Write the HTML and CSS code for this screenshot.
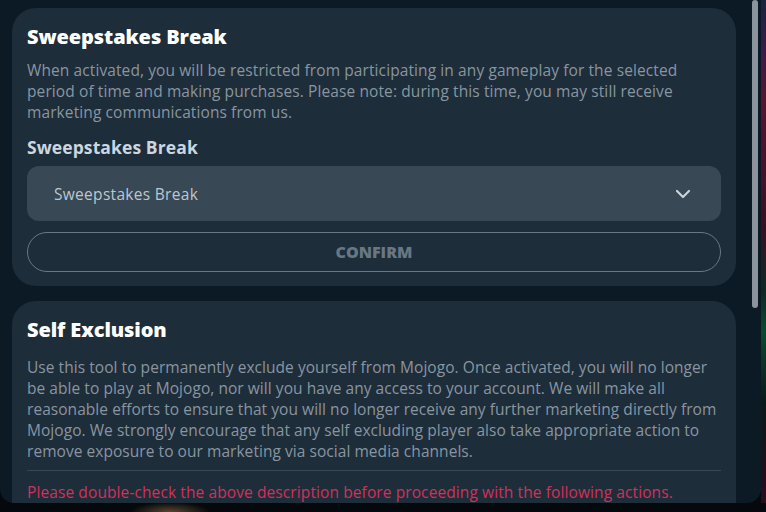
FILE: index.html
```html
<!DOCTYPE html>
<html lang="en">
<head>
    <meta charset="UTF-8">
    <meta name="viewport" content="width=device-width, initial-scale=1.0">
    <title>Responsible Gaming</title>
    <link rel="stylesheet" href="styles.css">
</head>
<body>
    <div class="screen">
        <div class="modal">
            <div class="modal-scroll">
                <section class="card">
                    <h2 class="card-title">Sweepstakes Break</h2>
                    <p class="card-text">When activated, you will be restricted from participating in any gameplay for the selected period of time and making purchases. Please note: during this time, you may still receive marketing communications from us.</p>
                    <label class="field-label">Sweepstakes Break</label>
                    <div class="select">
                        <span>Sweepstakes Break</span>
                        <svg class="chevron" width="16" height="10" viewBox="0 0 16 10" fill="none">
                            <path d="M2 2l6 6 6-6" stroke="#c9d3dc" stroke-width="2.2" stroke-linecap="round" stroke-linejoin="round"/>
                        </svg>
                    </div>
                    <button class="confirm-button">CONFIRM</button>
                </section>

                <section class="card card-last">
                    <h2 class="card-title">Self Exclusion</h2>
                    <p class="card-text">Use this tool to permanently exclude yourself from Mojogo. Once activated, you will no longer<br>
                        be able to play at Mojogo, nor will you have any access to your account. We will make all<br>
                        reasonable efforts to ensure that you will no longer receive any further marketing directly from<br>
                        Mojogo. We strongly encourage that any self excluding player also take appropriate action to<br>
                        remove exposure to our marketing via social media channels.</p>
                    <hr class="divider">
                    <p class="warning">Please double-check the above description before proceeding with the following actions.</p>
                </section>
            </div>
            <div class="scrollbar">
                <div class="scrollbar-thumb"></div>
            </div>
        </div>
        <div class="backdrop-edge"></div>
    </div>
    <div class="bottom-strip"></div>
</body>
</html>
```

FILE: styles.css
```css
body {
    margin: 0;
    font-family: "Open Sans", Lato, sans-serif;
    background-color: #05080c;
    width: 766px;
    height: 512px;
    overflow: hidden;
}

.screen {
    display: flex;
    height: 503px;
}

.modal {
    width: 761px;
    height: 503px;
    display: flex;
    background-color: #0c1a26;
    border-radius: 0 0 14px 14px;
    overflow: hidden;
}

.modal-scroll {
    flex: 1;
    padding: 8px 15px 0 12px;
    overflow: hidden;
}

.backdrop-edge {
    flex: 1;
    background: linear-gradient(180deg, #1b2340 0%, #3a1c4a 10%, #5a1530 20%, #3a1020 45%, #0c2a22 58%, #0d4a2c 66%, #0a1a18 80%, #2a0c1c 100%);
}

.bottom-strip {
    height: 9px;
    background: radial-gradient(ellipse 40px 10px at 170px 9px, #5a4630 0%, #05080c 100%);
}

.card {
    background-color: #1e2d3a;
    border-radius: 24px;
    padding: 14px 15px 14px 15px;
    margin-bottom: 15px;
}

.card-title {
    margin: 0;
    font-size: 20px;
    font-weight: 800;
    color: #ffffff;
    line-height: 30px;
    letter-spacing: -0.1px;
}

.card-text {
    margin: 8px 0 0;
    font-size: 15.5px;
    line-height: 21px;
    color: #8995a0;
    letter-spacing: 0.1px;
}

.field-label {
    display: block;
    margin-top: 11px;
    font-size: 17.5px;
    font-weight: 700;
    color: #ccd6df;
    line-height: 26px;
    letter-spacing: 0.1px;
}

.select {
    margin-top: 6px;
    height: 55px;
    background-color: #384854;
    border-radius: 12px;
    display: flex;
    align-items: center;
    justify-content: space-between;
    padding: 0 30px 0 27px;
    font-size: 15.5px;
    color: #bcc7d1;
    letter-spacing: 0.3px;
}

.chevron {
    display: block;
}

.confirm-button {
    display: block;
    width: 100%;
    margin-top: 11px;
    height: 40px;
    background: transparent;
    border: 1px solid #6a7884;
    border-radius: 20px;
    font-family: inherit;
    font-size: 16px;
    font-weight: 800;
    color: #687784;
}

.card-last {
    padding-bottom: 30px;
}

.card-last .card-text {
    margin-top: 12px;
    letter-spacing: 0.05px;
}

.divider {
    margin: 8px 0 0;
    border: none;
    border-top: 1px solid #3a4853;
}

.warning {
    margin: 11px 0 0;
    font-size: 15.5px;
    line-height: 21px;
    color: #d4305a;
    letter-spacing: 0.1px;
}

.scrollbar {
    width: 9px;
    padding-left: 1px;
}

.scrollbar-thumb {
    width: 6px;
    height: 308px;
    background-color: #8b949c;
    border-radius: 3px;
}
```
